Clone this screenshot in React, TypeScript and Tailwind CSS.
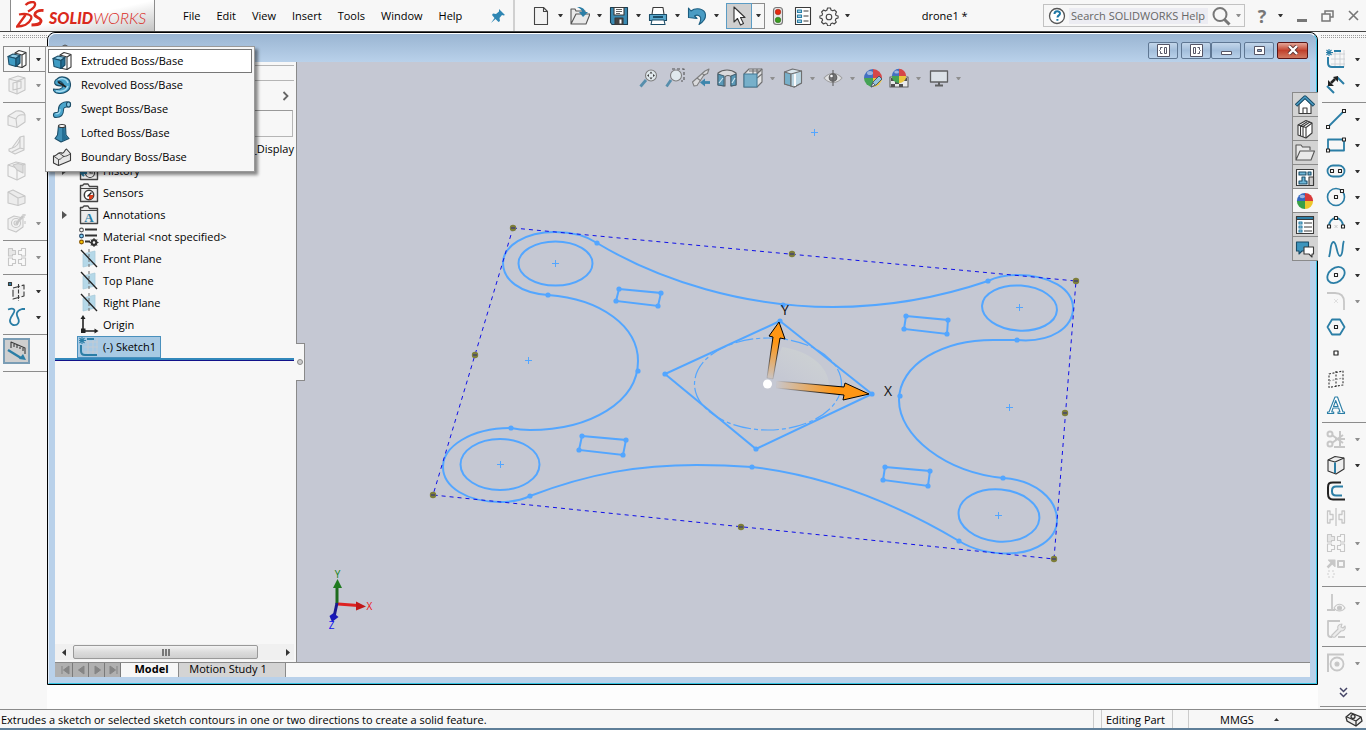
import React from "react";

type Kids = { children?: React.ReactNode };

const G = "#3a3a3a";
const B = "#2b7ea6";
const L = "#9fd0e6";

function Ico({ children, dim = false }: Kids & { dim?: boolean }) {
  return (
    <svg width="20" height="20" viewBox="0 0 20 20" fill="none" stroke={G} strokeWidth="1.100" strokeLinejoin="round" className={dim ? "shrink-0 opacity-25 grayscale" : "shrink-0"} aria-hidden="true">
      {children}
    </svg>
  );
}

function Caret({ dim = false }: { dim?: boolean }) {
  return (
    <svg width="5" height="3" viewBox="0 0 5 3" className="shrink-0" aria-hidden="true">
      <path d="M0 0h5L3 3H2z" fill={dim ? "#8f8f8f" : "#333"} />
    </svg>
  );
}

/* ---------- feature icons ---------- */

const Extrude = () => (
  <>
    <path d="M8 4l4-2.500 7 2V16l-4 2.500L8 17z" fill="#fff" />
    <path d="M8 4l7 2v12.500M15 6l4-2.500" />
    <path d="M1 7.500l5-2.500 7 1.500-4 3z" fill="#8ccbe6" stroke="#1b4d68" />
    <path d="M1 7.500l8 2v8l-7-2z" fill="#3f9cc4" stroke="#1b4d68" />
    <path d="M9 9.500l4-3V14l-4 3.500z" fill="#256f94" stroke="#1b4d68" />
  </>
);
const Revolve = () => (
  <>
    <path d="M5 4c4-4 13-2 13.500 5S12 19 7 18.500c-4-.5-6-2.500-5.500-4.500 5 1 9 0 9.500-3C8 11 5 11 3.500 9.500S2.500 5 5 4z" fill="#4aa5cc" stroke="#1b4d68" />
    <path d="M6 5c4-3 9-1 10 3M4 16c5 1 10 0 12-5" stroke="#a8dbf0" strokeWidth="1.500" />
    <path d="M5.500 6.500c2-1 5 0 7 5" stroke="#1b4d68" />
    <path d="M6 7l8 5" strokeWidth="1.500" stroke="#222" />
  </>
);
const Sweep = () => (
  <>
    <path d="M4 16c4 0 5-2 5-5.500S12 5 16 5.500" stroke="#1b4d68" strokeWidth="6.200" strokeLinecap="round" />
    <path d="M4 16c4 0 5-2 5-5.500S12 5 16 5.500" stroke="#4aa5cc" strokeWidth="4.200" strokeLinecap="round" />
    <ellipse cx="16.500" cy="5.500" rx="2" ry="2.500" fill="#8ccbe6" stroke="#1b4d68" />
    <path d="M3.500 15c4 0 5-2 4.500-5" stroke="#a8dbf0" />
  </>
);
const Loft = () => (
  <>
    <path d="M6.500 3l-1 9L3 15.500l6 3.500 8-3.500-3-3.500-.5-9z" fill="#3f8fb5" stroke="#1b4d68" />
    <path d="M10 4v14l6-2.500-3-3-.5-8z" fill="#256f94" stroke="none" />
    <ellipse cx="10" cy="3" rx="3.500" ry="1.500" fill="#fff" />
  </>
);
const Boundary = () => (
  <>
    <path d="M1.500 9c2.500.5 3.500-2 5.500-3s2.500.5 4 0 1.500-3 3.500-4l4 4.500v7L6.500 18.500l-5-2.500z" fill="#e6e6e6" />
    <path d="M1.500 9l5 3.500c3 0 3-2.500 5.500-3s3.500-.5 6.500-3M6.500 12.500v6M7 6l5 3.500" strokeWidth="0.900" />
  </>
);
const Cut = () => (
  <>
    <path d="M2 4l9-3 7 2v12l-8 4-8-3z" fill="#ddd" />
    <path d="M2 4l8 2v13M10 6l8-3M6 8l8-2v7l-8 2z" />
  </>
);
const FilletBox = () => (
  <>
    <path d="M1 7l8-5c4-.5 8 0 9 4v7l-8 5.500L1 16z" fill="#ddd" />
    <path d="M1 7l8 3c1-3 4-5 9-4M9 10l1 8.500" />
  </>
);
const Rib = () => (
  <>
    <path d="M13 2l4-1v14l-9 4-6-3v-2l3-1z" fill="#ddd" />
    <path d="M13 2v11l-8 4M5 13c4-1 7-4 8-9M13 13l4 1" />
  </>
);
const ShellBox = () => (
  <>
    <path d="M1 4l8-3 9 2v12l-8 4-9-4z" fill="#eee" />
    <path d="M1 4l9 3v12M10 7l8-4" />
    <path d="M6 4l5-1.500 5 1.500v8L10 9z" fill="#999" />
  </>
);
const Draft = () => (
  <>
    <path d="M1 5l5-2 12 6v7l-7 2.500L1 16z" fill="#ccc" />
    <path d="M1 5l10 6v7.500M11 11l7-2" />
  </>
);
const Wizard = () => (
  <>
    <path d="M1 6l6-3 9 2v9l-7 5-8-3z" fill="#ddd" />
    <circle cx="9" cy="10" r="4.500" fill="#eee" />
    <circle cx="9" cy="10" r="2" />
    <path d="M9 11L16 3" strokeWidth="2.500" />
    <path d="M17 1v4M15 2h4M18 8v3" />
  </>
);
const Pattern = () => (
  <>
    <path d="M18.500 1.500h-4v2h-3v4h3v1.500h4zM1.500 11h4v1.500h3v4h-3v2h-4zM18.500 11h-4v1.500h-3v4h3v2h4z" fill="#fff" />
    <path d="M1.500 1.500h4v2h3v4h-3V9h-4z" fill="#bbb" />
  </>
);
const RefGeom = () => (
  <>
    <path d="M6 7l11-3v11L6 18z" fill="#eee" strokeDasharray="7 2" />
    <path d="M11.500 3v17" strokeDasharray="4 1.500" />
    <rect x="1.500" y="1.500" width="3" height="3" fill={B} />
  </>
);
const Curve = () => (
  <path d="M1 2.500c6-2 8 0 5 4.500s-5 8 0 11c5 1 7-3 5-7s-2-7 4-9h3" stroke={B} strokeWidth="1.800" />
);
const Instant = () => (
  <>
    <path d="M4 7V1l14 6v6M7 6V3M10 7V4M13 8V6M16 10V7" />
    <path d="M1 9l13 8" stroke={B} strokeWidth="2.500" />
    <path d="M19 19l-7-1 4-5z" fill={B} stroke="none" />
  </>
);

/* ---------- sketch icons ---------- */

const grid = <path d="M5 5h14M5 10h14M5 15h14M9 1v17M14 1v17M18 1v17" stroke="#c8cbd0" strokeWidth="0.800" />;
const Pt = ({ x, y }: { x: number; y: number }) => <rect x={x - 1.5} y={y - 1.5} width="3" height="3" fill="#fff" stroke="#222" strokeWidth="1.100" />;

const Sketch = () => (
  <>
    {grid}
    <path d="M8 2h7M2 8v6c0 3 1 4 4 4h12" stroke={B} strokeWidth="2" />
    <path d="M3 0v7M0 3.500h7M.5 1l5 5M5.500 1l-5 5" stroke={B} />
  </>
);
const Dim = () => (
  <>
    <path d="M11 2l7 7M1 11l7 7" stroke={B} strokeWidth="2" />
    <path d="M5 8l4-4" strokeWidth="2.500" stroke="#222" />
    <path d="M2 11V5l6 6zM12 1v6L7 2z" fill="#222" stroke="none" />
  </>
);
const LineI = () => (
  <>
    <path d="M2 18L18 2" stroke={B} strokeWidth="1.800" />
    <Pt x={2} y={18} />
    <Pt x={18} y={2} />
  </>
);
const RectI = () => (
  <>
    <path d="M2 4.500h16v11H2z" stroke={B} strokeWidth="1.800" />
    <Pt x={2} y={15.5} />
    <Pt x={18} y={4.5} />
  </>
);
const Slot = () => (
  <>
    <rect x="1.500" y="4.500" width="17" height="11" rx="5.500" stroke={B} strokeWidth="1.800" />
    <Pt x={6} y={10} />
    <Pt x={14} y={10} />
  </>
);
const CircleI = () => (
  <>
    <circle cx="10" cy="10" r="8.500" stroke={B} strokeWidth="1.600" />
    <Pt x={10} y={10} />
    <Pt x={16} y={4} />
  </>
);
const Arc = () => (
  <>
    <path d="M3 13a7 8 0 0 1 14 0" stroke={B} strokeWidth="1.800" />
    <path d="M8.500 12l3 3M11.500 12l-3 3" stroke="#bbb" strokeWidth="0.800" />
    <Pt x={3} y={13.5} />
    <Pt x={17} y={13.5} />
    <Pt x={10} y={5} />
  </>
);
const Spline = () => <path d="M3 18C5 13 4 3 7.500 3s3 14 6.500 14 2-12 4-15" stroke={B} strokeWidth="1.800" />;
const EllipseI = () => (
  <>
    <ellipse cx="10" cy="10" rx="9.500" ry="7" transform="rotate(-38 10 10)" stroke={B} strokeWidth="1.800" />
    <Pt x={10} y={10} />
  </>
);
const SkFillet = () => (
  <>
    <path d="M1 2h8c6 0 9 3 9 9v8" strokeWidth="1.800" />
    <path d="M8 8l4 4M12 8l-4 4" strokeWidth="0.500" />
  </>
);
const Poly = () => (
  <>
    <path d="M6 2.500h8l4.500 7.500-4.500 7.500H6L1.500 10z" stroke={B} strokeWidth="1.800" />
    <Pt x={10} y={10} />
  </>
);
const Point = () => <rect x="8" y="8" width="4" height="4" fill="#fff" stroke="#222" strokeWidth="1.200" />;
const Region = () => (
  <>
    <path d="M3 5l14-3v14L3 18.500zM10 2v16" stroke="#333" strokeDasharray="2 1.500" />
    <path d="M3 12l14-3" stroke="#999" strokeDasharray="2 1.500" />
  </>
);
const LetterA = () => (
  <>
    <path d="M9 2h2.500l5.500 15h1.500v1.500H12V17h2l-1.300-4H7l-1.300 4h2v1.500H1.500V17H3zM9.700 5.500L7.500 11.500h4.600z" stroke={B} strokeWidth="1.100" fill="#fff" />
  </>
);
const Trim = () => (
  <>
    <circle cx="4" cy="5" r="2.500" strokeWidth="2" />
    <circle cx="4" cy="15" r="2.500" strokeWidth="2" />
    <path d="M6 6l11 8M6 14l11-8M14 2v16M9 10h10M8 18h11" strokeWidth="2" />
  </>
);
const Convert = () => (
  <>
    <path d="M2 5l7-3.500L18 3v11l-8 5-8-3z" fill="#eee" stroke="#333" />
    <path d="M9 7l9-4M2 5l7 2" stroke="#333" />
    <path d="M9 7.500v10.500" stroke={B} strokeWidth="2" />
  </>
);
const OffsetI = () => (
  <>
    <path d="M15 1.500H7c-4 0-5 1-5 5v6c0 4 1 6 5 6h12" stroke="#222" strokeWidth="2" />
    <path d="M17 5.500h-7c-3 0-4 1-4 4v1c0 3 1 4 4 4h6" stroke={B} strokeWidth="2" />
  </>
);
const Mirror = () => <path d="M10 1v18M1.500 4H4v3.500h3v5H4V16H1.500zM18.500 4H16v3.500h-3v5h3V16h2.500z" strokeWidth="1.300" />;
const MoveI = () => (
  <>
    <path d="M1.500 8.500l5-5" strokeWidth="2.500" />
    <path d="M2.500 1h6.500v6.500z" fill="#3a3a3a" />
    <rect x="12" y="2" width="6" height="6" strokeWidth="2" />
    <rect x="2" y="12" width="6" height="6" strokeWidth="0.800" strokeDasharray="2 2" />
  </>
);
const Relations = () => (
  <>
    <path d="M6 1v16M1 17h8" strokeWidth="1.800" />
    <path d="M8 15c3-5 8-5 11 0-3 4-8 4-11 0z" />
    <circle cx="13.500" cy="15" r="2" fill="#333" />
  </>
);
const Repair = () => (
  <>
    <path d="M14 2H2v13c0 2 1 3 3 3h1M12 18h7" strokeWidth="1.800" />
    <path d="M6 16l6-6c-1-3 1-5 4-5l-1 3 2 1 2-2c1 3-1 5-4 5l-6 6c-2 1-4-1-3-2z" fill="#ccc" />
  </>
);
const Snaps = () => (
  <>
    <path d="M1 1.500h17M2 1v18" strokeWidth="2" />
    <circle cx="11" cy="11" r="6.500" strokeWidth="1.800" />
    <circle cx="11" cy="11" r="2" fill="#333" />
  </>
);

/* ---------- tree icons ---------- */

const folder = <path d="M1.500 18.500V2.500h2L5 1h4l1.500 2.500h8v15z" fill="#ececec" stroke="#444" strokeWidth="1.400" />;
const folderLine = <path d="M1.500 5.500h17" stroke="#444" />;
const HistoryI = () => (
  <>
    {folder}
    {folderLine}
    <circle cx="11" cy="12" r="4.500" fill="#fff" />
    <path d="M11 9v3h3" />
    <path d="M2 12h6M5 9l-3 3 3 3" stroke={B} strokeWidth="2" />
  </>
);
const Sensors = () => (
  <>
    {folder}
    {folderLine}
    <circle cx="10" cy="12" r="4.700" fill="#fff" strokeWidth="1.500" />
    <path d="M10 12h4.500a4.500 4.500 0 0 1-4.500 4.500z" fill="#e0401c" stroke="none" />
    <path d="M8.500 13.500l4-4" stroke="#222" strokeWidth="1.500" />
  </>
);
const Annotations = () => (
  <>
    {folder}
    {folderLine}
    <text x="10" y="17" textAnchor="middle" fontSize="13" fontWeight="700" fill={B} stroke="none" fontFamily="Liberation Serif, serif">A</text>
  </>
);
const Material = () => (
  <>
    <circle cx="2.500" cy="3" r="1.900" fill="#fff" stroke="#555" />
    <circle cx="2.500" cy="9" r="1.900" fill="#7fd0f2" stroke="#246" />
    <circle cx="2.500" cy="15" r="1.900" fill="#f5c400" stroke="#850" />
    <path d="M6 2.500h12M6 8.500h12M6 14.500h5" stroke="#333" strokeWidth="2.200" />
    <circle cx="15" cy="15.500" r="2.400" stroke="#333" strokeWidth="2.200" />
    <path d="M15 11v9M10.500 15.500h9M12 12.500l6 6M18 12.500l-6 6" stroke="#333" strokeWidth="1" />
    <circle cx="15" cy="15.500" r="1.200" fill="#f7f7f7" stroke="none" />
  </>
);
const Plane = () => (
  <>
    <path d="M4 5l12-3v13L4 18z" fill="#b5d8e8" stroke="#a9cbdb" strokeWidth="0.800" />
    <path d="M10 0v20" stroke="#777" strokeDasharray="3 2" />
    <path d="M2 1l16 17" stroke="#222" strokeWidth="1.300" />
  </>
);
const OriginI = () => (
  <>
    <path d="M4 3v13h13" stroke="#222" strokeWidth="1.600" />
    <path d="M4 0l2.500 4h-5zM19.500 16l-4-2.500v5zM2 13.500h4.500V18H2z" fill="#222" stroke="none" />
  </>
);

/* ---------- application bar icons ---------- */

const NewDoc = () => <path d="M3.500 1.500h9l4 4v13h-13zM12.500 1.500v4h4" fill="#f3f3f3" stroke="#444" />;
const OpenDoc = () => (
  <>
    <path d="M1 18V3h4l1 2h9v3M1 18L6 8h14l-4 10z" fill="#e9e9e9" stroke="#555" />
    <path d="M7 1c5-.5 8 2 8 5h3l-5 5-4-5h3c0-2-2-4-5-5z" fill={B} stroke="none" />
  </>
);
const Save = () => (
  <>
    <path d="M1.500 1.500h17v17H3l-1.500-2z" fill="#3b8bb3" stroke="#1b3d50" />
    <path d="M5 1.500h10v7.500H5z" fill="#fff" />
    <path d="M7 3.500h6M7 5.500h6M7 7.500h4" stroke="#666" />
    <path d="M6 12h8v6.500H6z" fill="#444" />
    <path d="M10.500 13.500h2v4h-2z" fill="#fff" stroke="none" />
  </>
);
const Print = () => (
  <>
    <path d="M5 1.500h10l1 7H4z" fill="#fff" />
    <path d="M1.500 8.500h17v6h-17z" fill="#5aa9cd" stroke="#1b4d68" />
    <path d="M5 11h10" stroke="#1b4d68" strokeWidth="2" />
    <path d="M4 14h12l1 4.500H3z" fill="#fff" stroke="#1b4d68" />
  </>
);
const Undo = () => (
  <path d="M1.500 2l2.500 3C9 1 18 2.500 18.500 9c.3 4-2.500 7-6.500 9.500 2-4 2.500-6 1-8-1.500-1.500-4-1.500-5.500-.5L10 12.500l-8.500-1z" fill="#4a9cc4" stroke="#1b5d80" />
);
const Cursor = () => <path d="M5 1v15l3.500-3.500L11.500 19l3-1.500-3-6h4.500z" fill="#fff" stroke="#333" />;
const Traffic = () => (
  <>
    <rect x="5.500" y="1.500" width="9" height="17" rx="3" fill="#e8e8e8" stroke="#777" />
    <circle cx="10" cy="6" r="2.800" fill="#e62a10" stroke="#8a1a0a" strokeWidth="0.500" />
    <circle cx="10" cy="14" r="2.800" fill="#3b9b20" stroke="#1f5c10" strokeWidth="0.500" />
  </>
);
const ListI = () => (
  <>
    <path d="M2.500 1.500h15v17h-15z" fill="#fff" />
    <path d="M4.500 4h4v2.500h-4zM4.500 9h4v2.500h-4zM4.500 14h4v2.500h-4z" fill={L} stroke={B} />
    <path d="M10.500 5h5M10.500 10h5M10.500 15h5" strokeWidth="1.200" />
  </>
);
const Gear = () => (
  <>
    <path d="M8.500 2h3l.5 2 1.700.8L15.500 4l2 2-1 2 .6 1.500 2 .5v2l-2.100.6-.7 1.600 1 1.800-2 2-1.800-1-1.600.7-.6 2H8.600l-.7-2.100-1.500-.6-1.900 1-2-2 1.100-1.900-.7-1.500-2-.6V10l2-.5.7-1.600-1-1.900 2-2 1.800 1L8 4z" stroke="#444" />
    <circle cx="10" cy="11" r="2.800" stroke="#444" />
  </>
);

/* ---------- view toolbar icons ---------- */

const Glass = ({ children, x = 12 }: Kids & { x?: number }) => (
  <>
    <path d={`M1.500 18.500L${x - 5} 12`} stroke="#4b88a8" strokeWidth="2.800" />
    <circle cx={x} cy="7.500" r="5.500" fill="#e4edf0" stroke="#777" />
    {children}
  </>
);
const ZoomFit = () => <Glass><path d="M12 3.500l1.500 2h-3zM12 11.500l1.500-2h-3zM8 7.500l2-1.500v3zM16 7.500l-2-1.500v3z" fill="#333" stroke="none" /></Glass>;
const ZoomArea = () => (
  <>
    <path d="M7 1h12v12h-3" stroke="#444" strokeDasharray="3 2" />
    <Glass x={11} />
  </>
);
const PrevView = () => (
  <>
    <path d="M1.500 14L14 3l4-2-1.500 4.500L13 7l-7 10.500-3 .5z" fill="#ddd" stroke="#777" />
    <path d="M6 10l4 3M11 5.500l3 2" stroke="#777" />
    <path d="M13 14.500h6" stroke="#2f7fa8" strokeWidth="2.800" />
    <path d="M9 14.500l5-4v8z" fill="#2f7fa8" stroke="none" />
  </>
);
const Section = () => (
  <>
    <path d="M1 5c5-4 13-4 18 0v12l-5 1V9c-1-2-5-2-6 0v9l-7-1z" fill="#ddd" stroke="#555" />
    <path d="M1 6l6 2v10l-6-1zM14 8l5-2v11l-5 1z" fill="#4f95b5" stroke="#35586b" />
    <path d="M2 15l4-5M15 15l3-5" stroke="#d8ecf5" />
  </>
);
const ViewOri = () => (
  <>
    <path d="M1 6l5-5h13v13l-5 5H1z" fill="#e6e6e6" stroke="#666" />
    <path d="M14 6l5-5M10 1v5M14 1v5M14 10l5-4M6 3h12" stroke="#666" />
    <path d="M1 6h13v13H1z" fill="#6faeca" stroke="#35718f" />
  </>
);
const Display = () => (
  <>
    <path d="M1.500 4l8-3 9 2v12l-7 4-10-3z" fill="#ddeaf0" stroke="#666" />
    <path d="M1.500 4L8 6v12l-6.500-2z" fill="#6faeca" stroke="#666" />
    <path d="M8 6l10.500-3v12L11 19l-3-1z" fill="#b9d7e4" stroke="#666" />
    <path d="M12 6v12" stroke="#fff" strokeWidth="2" />
  </>
);
const Eye = () => (
  <>
    <path d="M1 10c5-6 13-6 18 0-5 6-13 6-18 0z" fill="#e6e6e6" stroke="#999" />
    <circle cx="10" cy="9.500" r="3.800" fill="#6b6b6b" stroke="#555" />
    <path d="M10 2v16" stroke="#555" />
    <circle cx="8.500" cy="8" r="1.300" fill="#fff" stroke="none" />
  </>
);
const ball = (
  <>
    <path d="M10 10V1a9 9 0 0 1 9 9z" fill="#d83a3a" stroke="none" />
    <path d="M10 10V1a9 9 0 0 0-9 9z" fill="#3568c0" stroke="none" />
    <path d="M10 10H1a9 9 0 0 0 9 9z" fill="#38a048" stroke="none" />
    <path d="M10 10h9a9 9 0 0 1-9 9z" fill="#edc62c" stroke="none" />
    <ellipse cx="7" cy="5" rx="3" ry="2" fill="#fff" opacity="0.5" stroke="none" />
  </>
);
const Appearance = () => (
  <>
    {ball}
    <path d="M8 19l2-5 6-6 3 3-6 6z" fill="#8fc4de" stroke="#345" strokeWidth="0.900" />
    <path d="M8 19l2-4 2 2z" fill="#fff" stroke="#345" strokeWidth="0.800" />
  </>
);
const Scene = () => (
  <>
    <path d="M1 9h18v10H1z" fill="#eee" stroke="#555" />
    <path d="M2 10h4v3H2zM6 13h4v3H6zM14 10h4v3h-4zM10 16h4v3h-4zM2 16h4v3H2z" fill="#444" stroke="none" />
    <g transform="translate(2 0) scale(.8)">{ball}</g>
  </>
);
const Monitor = () => (
  <>
    <path d="M1.500 3h17v11h-17z" fill="#dfe5ea" stroke="#555" strokeWidth="1.300" />
    <path d="M10 14v3M6 17.500h8" stroke="#555" strokeWidth="2" />
  </>
);

/* ---------- task pane icons ---------- */

const Home = () => (
  <>
    <path d="M4 9v9.500h12V9l-6-6z" fill="#fff" />
    <path d="M8 18.500V13h4v5.500" />
    <path d="M1 10.500L10 2l9 8.500" stroke="#1b4d68" strokeWidth="3.500" />
    <path d="M1.500 10L10 2l8.500 8" stroke="#4a9cc4" strokeWidth="1.500" />
  </>
);
const Books = () => (
  <>
    <path d="M3 6l8-4.500 6 2.500v10l-6 5-8-3z" fill="#fff" />
    <path d="M5.500 7v10M8 8v10M11 8.500V19M3 6l8 2.500L17 4M5.500 7l7-4.500M8 7.500l7-4.500" />
  </>
);
const Folder2 = () => <path d="M1 17V2h5l1.500 2H15v3M1 17L5 8h14.500L16 17z" fill="#e9e9e9" stroke="#555" />;
const Palette = () => (
  <>
    <path d="M1.500 2.500h17v16h-17z" fill="#fff" />
    <path d="M4 5h7v3H4zM13 5h3v3h-3zM7 10h3v4h2v3H4v-3h3z" fill="#6fb7d8" stroke="#1b4d68" />
    <path d="M14 10h4.500v8.500H14z" fill="#ccc" />
  </>
);
const Props = () => (
  <>
    <path d="M1.500 1.500h17v17h-17z" fill="#fff" />
    <path d="M1.500 1.500h17v3h-17z" fill={B} />
    <path d="M4 7h3v2H4zM4 11h3v2H4zM4 15h3v2H4z" fill={L} stroke={B} />
    <path d="M9 8h8M9 12h8M9 16h8" strokeWidth="1.200" />
  </>
);
const Chat = () => (
  <>
    <path d="M1.500 3h12v9H7l-3 3v-3H1.500z" fill="#3d95bd" stroke="#1b4d68" />
    <path d="M9 8h9.500v7H17v3l-3-3H9z" fill="#fff" />
  </>
);

type Tool = { n: string; i: () => React.ReactElement; a?: boolean; d?: boolean; on?: boolean };

const leftGroups: Tool[][] = [
  [{ n: "Extruded Boss/Base", i: Extrude, a: true, on: true }, { n: "Extruded Cut", i: Cut, a: true, d: true }],
  [
    { n: "Fillet", i: FilletBox, a: true, d: true },
    { n: "Rib", i: Rib, d: true },
    { n: "Shell", i: ShellBox, d: true },
    { n: "Draft", i: Draft, d: true },
    { n: "Hole Wizard", i: Wizard, a: true, d: true },
  ],
  [{ n: "Linear Pattern", i: Pattern, a: true, d: true }],
  [{ n: "Reference Geometry", i: RefGeom, a: true }, { n: "Curves", i: Curve, a: true }],
  [{ n: "Instant3D", i: Instant, on: true }],
];

const rightGroups: Tool[][] = [
  [{ n: "Sketch", i: Sketch, a: true }, { n: "Smart Dimension", i: Dim, a: true }],
  [
    { n: "Line", i: LineI, a: true },
    { n: "Rectangle", i: RectI, a: true },
    { n: "Slot", i: Slot, a: true },
    { n: "Circle", i: CircleI, a: true },
    { n: "Arc", i: Arc, a: true },
    { n: "Spline", i: Spline, a: true },
    { n: "Ellipse", i: EllipseI, a: true },
    { n: "Sketch Fillet", i: SkFillet, a: true, d: true },
    { n: "Polygon", i: Poly },
    { n: "Point", i: Point },
    { n: "Plane", i: Region },
    { n: "Text", i: LetterA },
  ],
  [
    { n: "Trim Entities", i: Trim, a: true, d: true },
    { n: "Convert Entities", i: Convert, a: true },
    { n: "Offset Entities", i: OffsetI },
    { n: "Mirror Entities", i: Mirror, d: true },
    { n: "Sketch Pattern", i: Pattern, a: true, d: true },
    { n: "Move Entities", i: MoveI, a: true, d: true },
  ],
  [{ n: "Relations", i: Relations, a: true, d: true }, { n: "Repair Sketch", i: Repair, d: true }],
  [{ n: "Quick Snaps", i: Snaps, a: true, d: true }],
];

const menuItems: Tool[] = [
  { n: "Extruded Boss/Base", i: Extrude, on: true },
  { n: "Revolved Boss/Base", i: Revolve },
  { n: "Swept Boss/Base", i: Sweep },
  { n: "Lofted Boss/Base", i: Loft },
  { n: "Boundary Boss/Base", i: Boundary },
];

const tree: Tool[] = [
  { n: "History", i: HistoryI, a: true },
  { n: "Sensors", i: Sensors },
  { n: "Annotations", i: Annotations, a: true },
  { n: "Material <not specified>", i: Material },
  { n: "Front Plane", i: Plane },
  { n: "Top Plane", i: Plane },
  { n: "Right Plane", i: Plane },
  { n: "Origin", i: OriginI },
  { n: "(-) Sketch1", i: Sketch, on: true },
];

const viewTools: Tool[] = [
  { n: "Zoom to Fit", i: ZoomFit },
  { n: "Zoom to Area", i: ZoomArea },
  { n: "Previous View", i: PrevView },
  { n: "Section View", i: Section },
  { n: "View Orientation", i: ViewOri, a: true },
  { n: "Display Style", i: Display, a: true },
  { n: "Hide/Show Items", i: Eye, a: true },
  { n: "Edit Appearance", i: Appearance },
  { n: "Apply Scene", i: Scene, a: true },
  { n: "View Settings", i: Monitor, a: true },
];

const paneTabs: Tool[] = [
  { n: "Resources", i: Home },
  { n: "Design Library", i: Books },
  { n: "File Explorer", i: Folder2 },
  { n: "View Palette", i: Palette },
  { n: "Appearances", i: () => <g transform="translate(1 1) scale(.9)">{ball}</g>, on: true },
  { n: "Custom Properties", i: Props },
  { n: "Forum", i: Chat },
];

const fileTools: Tool[] = [
  { n: "New", i: NewDoc },
  { n: "Open", i: OpenDoc },
  { n: "Save", i: Save },
  { n: "Print", i: Print },
  { n: "Undo", i: Undo },
];

function Grip() {
  return <div className="ml-[3px] h-[3px] border-y border-dotted border-[#9a9a9a]" />;
}

function FlyoutMenu() {
  return (
    <ul className="absolute left-[42px] top-0 z-20 w-[210px] border border-[#999] bg-[#f7f7f7] p-[2px] shadow-[3px_3px_3px_rgba(0,0,0,0.45)]">
      {menuItems.map(({ n, i: I, on }) => (
        <li key={n}>
          <button className={"flex h-6 w-full items-center gap-[9px] pl-[3px] " + (on ? "border border-[#777] bg-white" : "border border-transparent")}>
            <Ico><I /></Ico>
            <span>{n}</span>
          </button>
        </li>
      ))}
    </ul>
  );
}

function ToolColumn({ groups, left = false }: { groups: Tool[][]; left?: boolean }) {
  return (
    <div className={"flex flex-col pt-2 " + (left ? "pl-[3px]" : "pl-1")}>
      {groups.map((g, k) => (
        <React.Fragment key={k}>
          {k > 0 && <div className="flex h-2 items-center"><div className="h-px w-full bg-[#8c8c8c]" /></div>}
          {g.map(({ n, i: I, a, d, on }) => (
            <div key={n} className="relative flex h-[26px]">
              <button aria-label={n} className={"flex w-[27px] shrink-0 items-center justify-center " + (on ? (a ? "border border-[#8a8a8a] bg-[#f7f7f7]" : "border-2 border-[#7a9db5] bg-[#cfcfcf]") : "")}>
                <Ico dim={d}><I /></Ico>
              </button>
              {a && (
                <button aria-label={n + " options"} className={"flex w-4 items-center justify-center " + (on ? "border-y border-[#8a8a8a]" : "")}>
                  <Caret dim={d} />
                </button>
              )}
              {on && a && <FlyoutMenu />}
            </div>
          ))}
        </React.Fragment>
      ))}
      {left && <div className="mt-[7px] h-px bg-[#8c8c8c]" />}
    </div>
  );
}

function Header() {
  return (
    <header className="flex h-8 shrink-0 items-center border-b border-[#444] bg-[#f7f7f7]">
      <div className="ml-[10px] flex h-full w-[145px] shrink-0 items-center border-x border-[#8c8c8c] bg-linear-to-br from-white from-50% to-[#c4c4c4] pl-[5px]">
        <svg width="28" height="30" viewBox="16 1 28 30" fill="none" stroke="#da291c" strokeWidth="2.300" aria-hidden="true">
          <path d="M25.500 5C29 1.500 36 .5 35 5 34.300 8 31 10 28 11.500" />
          <path d="M19 14.500C26 13 33 14.500 31 19 29 24 23 26.500 17 26.500L25.500 15" />
          <path d="M43.500 10.500C38 10 35 12 34.800 14.500 34.500 17.500 42 17.500 41 21.500 40 25 36 25 31.500 25" strokeWidth="2.800" />
        </svg>
        <span className="ml-[5px] mt-1 whitespace-nowrap font-['Lato'] text-[16px] leading-none text-[#da291c] italic">
          <b className="font-black">SOLID</b>
          <span className="font-light">WORKS</span>
        </span>
      </div>
      <nav className="flex h-full shrink-0 items-center gap-4 border-r-2 border-[#d0d0d0] pl-7 pr-[7px]">
        {["File", "Edit", "View", "Insert", "Tools", "Window", "Help"].map((m) => (
          <button key={m}>{m}</button>
        ))}
        <button aria-label="Pin menu" className="ml-3">
          <svg width="16" height="16" viewBox="0 0 16 16" aria-hidden="true">
            <path d="M9 1l6 6-1.500.5L12 7l-2.500 3 .5 3-1.500 1L5.500 11 1 15l3.500-5L2 7l1-1.500 3 .5L9 3.500z" fill="#2f86b3" />
          </svg>
        </button>
      </nav>
      <div className="flex shrink-0 items-center pl-4">
        {fileTools.map(({ n, i: I }) => (
          <div key={n} className="flex w-[39px] items-center gap-[6px]">
            <button aria-label={n}><Ico><I /></Ico></button>
            <button aria-label={n + " options"} className="flex h-5 w-[7px] items-center justify-center"><Caret /></button>
          </div>
        ))}
        <button aria-label="Select" className="flex h-[26px] w-[26px] items-center justify-center border border-[#5b9cc4] bg-[#cfcfcf]"><Ico><Cursor /></Ico></button>
        <button aria-label="Select options" className="flex h-[26px] w-[13px] items-center justify-center border border-l-0 border-[#8c8c8c]"><Caret /></button>
        <button aria-label="Rebuild" className="flex w-[25px] justify-center"><Ico><Traffic /></Ico></button>
        <button aria-label="File Properties" className="flex w-[26px] justify-center"><Ico><ListI /></Ico></button>
        <button aria-label="Options" className="flex w-[25px] justify-center"><Ico><Gear /></Ico></button>
        <button aria-label="More options" className="ml-1"><Caret /></button>
      </div>
      <h1 className="flex-1 pr-1 text-center">drone1 *</h1>
      <div className="flex h-[23px] w-[202px] shrink-0 items-center border border-[#c2c2c2] bg-[#f7f7f7] pl-1">
        <svg width="18" height="18" viewBox="0 0 18 18" aria-hidden="true">
          <circle cx="9" cy="9" r="7.500" fill="#fff" stroke="#555" strokeWidth="1.300" />
          <path d="M6.500 7c0-3.500 5.500-3.500 5.500-.5 0 2-2.500 1.800-2.500 4M9.400 12v1.800" fill="none" stroke="#1f78a5" strokeWidth="2" />
        </svg>
        <input aria-label="Search SOLIDWORKS Help" placeholder="Search SOLIDWORKS Help" className="ml-[3px] w-[139px] bg-[#ececf2] pl-[2px] outline-none placeholder:text-[#666]" />
        <button aria-label="Search" className="ml-[3px]">
          <svg width="20" height="20" viewBox="0 0 20 20" fill="none" stroke="#777" aria-hidden="true">
            <circle cx="9" cy="8.500" r="6.500" strokeWidth="2" />
            <path d="M13.500 13.500l5 5" strokeWidth="3" />
          </svg>
        </button>
        <button aria-label="Search options" className="ml-[5px]"><Caret dim /></button>
      </div>
      <div className="flex shrink-0 items-center pl-3 pr-[7px]">
        <button aria-label="Help" className="w-[10px] text-[18px] font-bold leading-5 text-[#777]">?</button>
        <button aria-label="Help options" className="ml-[11px]"><Caret /></button>
        <button aria-label="Minimize" className="ml-[14px]">
          <svg width="10" height="16" viewBox="0 0 10 16"><path d="M0 12.500h10" stroke="#777" strokeWidth="3" /></svg>
        </button>
        <button aria-label="Restore" className="ml-[14px]">
          <svg width="13" height="12" viewBox="0 0 13 12" fill="none" stroke="#777" strokeWidth="1.500"><path d="M4 4V1h8v6H9M1 4h8v7H1z" /></svg>
        </button>
        <button aria-label="Close" className="ml-[14px]">
          <svg width="11" height="11" viewBox="0 0 11 11" stroke="#777" strokeWidth="1.600"><path d="M1 1l9 9M10 1l-9 9" /></svg>
        </button>
      </div>
    </header>
  );
}

const frameBtn = "flex h-[17px] w-[30px] items-center justify-center rounded-[2px] border border-[#5f7793] bg-linear-to-b from-[#c3d6ea] via-[#a3bedb] to-[#b9d1ea]";

function TitleBar() {
  return (
    <div className="flex h-7 shrink-0 items-center justify-between bg-linear-to-b from-[#9ab5d2] to-[#b9d1ea] pl-2 pt-1">
      <svg width="16" height="12" viewBox="0 0 16 12" fill="#e5e5e5" stroke="#444" aria-hidden="true"><path d="M4 3l4-2 4 2v4L8 9 4 7z" /></svg>
      <div className="flex gap-[3px] pr-2">
        <button aria-label="Tile left" className={frameBtn}>
          <svg width="13" height="13" viewBox="0 0 13 13" fill="#fff" stroke="#556"><path d="M.5.5h12v12H.5z" /><path d="M5.500 3.500h-2v2l-1 1 1 1v2h2M7.500 3.500h2v6h-2z" fill="none" /></svg>
        </button>
        <div className="flex">
          <button aria-label="Tile right" className={frameBtn}>
            <svg width="13" height="13" viewBox="0 0 13 13" fill="#fff" stroke="#556"><path d="M.5.5h12v12H.5z" /><path d="M7.500 3.500h2v2l1 1-1 1v2h-2M3.500 3.500h2v6h-2z" fill="none" /></svg>
          </button>
          <button aria-label="Minimize document" className={frameBtn}>
            <svg width="11" height="13" viewBox="0 0 11 13" fill="#fff" stroke="#556"><path d="M.5 7.500h10v3H.5z" /></svg>
          </button>
        </div>
        <button aria-label="Restore document" className={frameBtn}>
          <svg width="11" height="9" viewBox="0 0 11 9" fill="#fff" stroke="#556"><path d="M.5.5h10v8H.5z" /><path d="M3.500 3.500h4v2h-4z" fill="#8aa5c2" /></svg>
        </button>
        <button aria-label="Close document" className="flex h-[17px] w-[31px] items-center justify-center rounded-[2px] border border-[#5a1515] bg-linear-to-b from-[#e3a598] via-[#c0402c] to-[#d07860]">
          <svg width="12" height="10" viewBox="0 0 12 10"><path d="M2 1l8 8M10 1L2 9" stroke="#5a3030" strokeWidth="4" /><path d="M2 1l8 8M10 1L2 9" stroke="#fff" strokeWidth="2.400" /></svg>
        </button>
      </div>
    </div>
  );
}

function FeatureTree() {
  return (
    <aside className="relative flex w-[242px] shrink-0 flex-col border-r border-[#8a8a8a] bg-[#f7f7f7] pb-[2px] pt-[3px]">
      <div className="mr-[2px] h-4 border-y border-[#b5b5b5]" />
      <div className="flex h-[29px] items-center justify-end pr-[6px]">
        <button aria-label="More tabs">
          <svg width="8" height="10" viewBox="0 0 8 10" fill="none" stroke="#666" strokeWidth="1.800"><path d="M1.500 1l4 4-4 4" /></svg>
        </button>
      </div>
      <div className="mb-px mr-[3px] h-[27px] border border-[#b5b5b5] border-t-[#999]" />
      <div className="flex h-[22px] items-center justify-end pr-[2px]">_Display</div>
      <ul>
        {tree.map(({ n, i: I, a, on }) => (
          <li key={n} className="flex h-[22px] items-center">
            <span className="flex w-[22px] shrink-0 pl-[7px]">
              {a && <svg width="5" height="8" viewBox="0 0 5 8"><path d="M0 0l5 4-5 4z" fill="#555" /></svg>}
            </span>
            <button className={"flex h-[22px] items-center gap-1 border pl-px pr-1 " + (on ? "border-[#4a90bd] bg-[#a8cae4]" : "border-transparent")}>
              <Ico><I /></Ico>
              <span className="whitespace-nowrap">{n}</span>
            </button>
          </li>
        ))}
      </ul>
      <div className="mr-[2px] h-[3px] shrink-0 border-b border-[#12128a] bg-[#3288bb]" />
      <div className="absolute -right-[9px] top-[281px] z-10 flex h-[38px] w-[9px] items-center justify-center border-y border-r border-[#8a8a8a] bg-[#f7f7f7]">
        <span className="size-[6px] rounded-full border border-[#8a8a8a] bg-[#ccc]" />
      </div>
      <div className="mr-[2px] mt-auto flex h-4 shrink-0 items-center bg-[#f0f0f0]">
        <button aria-label="Scroll left" className="flex w-[18px] justify-center"><svg width="4" height="7" viewBox="0 0 4 7"><path d="M4 0v7L0 3.500z" fill="#333" /></svg></button>
        <div className="flex h-[14px] w-[185px] items-center justify-center gap-px rounded-[2px] border border-[#999] bg-linear-to-b from-[#f3f3f3] via-[#dcdcdc] to-[#cfcfcf]">
          <span className="h-[7px] w-[2px] bg-[#777]" />
          <span className="h-[7px] w-[2px] bg-[#777]" />
          <span className="h-[7px] w-[2px] bg-[#777]" />
        </div>
        <button aria-label="Scroll right" className="ml-auto flex w-3 justify-center"><svg width="4" height="7" viewBox="0 0 4 7"><path d="M0 0v7l4-3.500z" fill="#333" /></svg></button>
      </div>
    </aside>
  );
}

const outline =
  "M597 243C585 235 570 232 555 232 525 232 503 246 503 263 503 280 520 293 548 295 602 299 638 327 638 361 638 402 590 430 530 430Q520 430 511 428C470 428 443 447 443 467 443 487 467 502 500 502 511 502 522 500 530 496 590 473 640 465 697 465Q725 465 752 467C820 475 890 500 959 541 972 549 988 553.500 1007 553.500 1036 553.500 1057 539 1057 520 1057 499 1035 480 1003 478 945 472 899 436 899 400 899 365 942 338 1000 340L1017 340C1052 343 1073 327 1073 308 1073 289 1050 275 1017 275 1005 275 996 277 988 281 935 299 885 307 833 307 745 307 660 281 597 243Z";

const dots = [
  [597, 243], [548, 295], [638, 371], [511, 428], [530, 496], [752, 467], [959, 541], [1003, 478], [900, 396], [1017, 340], [988, 281], [783, 305],
  [780, 321], [872, 394], [756, 449], [665, 374],
  [619, 289], [661, 293], [658, 306], [616, 301],
  [582, 436], [626, 440], [623, 455], [579, 450],
  [906, 316], [948, 320], [947, 334], [904, 329],
  [885, 467], [930, 471], [928, 486], [883, 480],
];
const corners = [[513, 228], [792, 254], [1076, 281], [1065, 413], [1054, 559], [741, 527], [433, 495], [475, 355]];
const crosses = [[555, 263], [528, 360], [500, 464], [1019, 307], [1009, 407], [998, 515], [814, 132]];

function Drawing() {
  return (
    <svg className="absolute inset-0 h-full w-full" viewBox="297 62 1013 600" fill="none" role="img" aria-label="Sketch geometry">
      <defs>
        <linearGradient id="ax" gradientUnits="userSpaceOnUse" x1="774" y1="384" x2="835" y2="390"><stop offset="0" stopColor="#ff9614" stopOpacity="0" /><stop offset="1" stopColor="#ff9614" /></linearGradient>
        <linearGradient id="ay" gradientUnits="userSpaceOnUse" x1="769" y1="382" x2="776" y2="342"><stop offset="0" stopColor="#ff9614" stopOpacity="0" /><stop offset="1" stopColor="#ff9614" /></linearGradient>
        <linearGradient id="ex" gradientUnits="userSpaceOnUse" x1="776" y1="384" x2="835" y2="390"><stop offset="0" stopOpacity="0" /><stop offset="1" /></linearGradient>
        <linearGradient id="ey" gradientUnits="userSpaceOnUse" x1="769" y1="382" x2="776" y2="342"><stop offset="0" stopOpacity="0" /><stop offset="1" /></linearGradient>
        <linearGradient id="fan" x1="0" y1="1" x2="1" y2="0"><stop offset="0.200" stopColor="#d3d6d6" stopOpacity="0" /><stop offset="1" stopColor="#cdd3d0" /></linearGradient>
      </defs>
      <path d="M768 384l14-37c26 4 46 18 47 38z" fill="url(#fan)" />
      <g stroke="#53a6ff" strokeWidth="2">
        <path d={outline} />
        <ellipse cx="555.500" cy="263.500" rx="37" ry="22" />
        <ellipse cx="500" cy="464.500" rx="39.500" ry="25.500" />
        <ellipse cx="1019.500" cy="308" rx="37.500" ry="22.500" transform="rotate(4 1019 308)" />
        <ellipse cx="999" cy="515.500" rx="40.500" ry="26" transform="rotate(5 999 515)" />
        <path d="M780 321l92 73-116 55-91-75zM619 289l42 4-3 13-42-5zM582 436l44 4-3 15-44-5zM906 316l42 4-1 14-43-5zM885 467l45 4-2 15-45-6z" />
        <ellipse cx="768" cy="384" rx="73.500" ry="46" strokeWidth="1.200" strokeDasharray="18 3 4 3" />
      </g>
      <path d="M513 228l563 53-22 278-621-64z" stroke="#1010e8" strokeWidth="1" strokeDasharray="4 4" />
      {corners.map(([x, y]) => (
        <g key={x}>
          <circle cx={x} cy={y} r="3.200" fill="#7d7d38" />
          <path d={`M${x - 2} ${y}h4`} stroke="#1414a0" strokeWidth="0.800" />
        </g>
      ))}
      {dots.map(([x, y]) => <circle key={`${x}-${y}`} cx={x} cy={y} r="2.600" fill="#53a6ff" />)}
      {crosses.map(([x, y]) => <path key={x} d={`M${x - 3} ${y + 0.5}h7M${x + 0.5} ${y - 3}v7`} stroke="#53a6ff" />)}
      <path d="M776 381l68 6 1-4 24 11-26 6 1-5-68-7z" fill="url(#ax)" stroke="url(#ex)" />
      <path d="M767 378l6-41-4-1 10-14 6 17-5-1-7 41z" fill="url(#ay)" stroke="url(#ey)" />
      <circle cx="767.500" cy="384" r="4.500" fill="#fff" />
      <g fontFamily="Open Sans, sans-serif" fontSize="14" fill="#111" textAnchor="middle">
        <text x="785" y="315">Y</text>
        <text x="888" y="396">X</text>
      </g>
      <path d="M337 604v-18" stroke="#1d6b1d" strokeWidth="3" />
      <path d="M337.500 579l4.500 9h-9z" fill="#1f7a1f" />
      <path d="M338 604l20 1.500" stroke="#d22" strokeWidth="3" />
      <path d="M366 606.500l-10 4v-9z" fill="#c11818" />
      <path d="M337 603l-3 14" stroke="#1a1a90" strokeWidth="3" />
      <path d="M332 622l-2.500-6 4-3 5 4z" fill="#1818b8" />
      <g fontFamily="Open Sans, sans-serif" fontSize="10" textAnchor="middle">
        <text x="337.500" y="578" fill="#108010">Y</text>
        <text x="369.500" y="610" fill="#f01010">X</text>
        <text x="331.500" y="629" fill="#1010f0">Z</text>
      </g>
    </svg>
  );
}

function Viewport() {
  return (
    <main className="relative min-w-0 flex-1 bg-[#c5c8d3]">
      <Drawing />
      <div className="relative flex h-8 items-center justify-center pr-[6px]">
        {viewTools.map(({ n, i: I, a }) => (
          <div key={n} className="flex items-center">
            <button aria-label={n} className="flex w-[26px] justify-center opacity-90"><Ico><I /></Ico></button>
            {a && <button aria-label={n + " options"} className="flex w-[14px] justify-center"><Caret dim /></button>}
          </div>
        ))}
      </div>
    </main>
  );
}

function BottomTabs() {
  return (
    <div className="flex h-[15px] shrink-0 border-t border-[#8a8a8a] bg-[#f7f7f7] leading-[11px]">
      <div className="flex bg-[#b0b0b0] pl-[2px]">
        {["M4 2v8M11 2L5.500 6l5.500 4z", "M10 2L4.500 6l5.500 4z", "M5 2l5.500 4L5 10z", "M11 2v8M4 2l5.500 4L4 10z"].map((d, k) => (
          <button key={k} aria-label={["First tab", "Previous tab", "Next tab", "Last tab"][k]} className="flex w-4 items-center justify-center border-r border-[#7a7a7a]">
            <svg width="14" height="12" viewBox="0 0 14 12"><path d={d} fill="#858585" stroke="#858585" /></svg>
          </button>
        ))}
      </div>
      <button className="w-[57px] pb-[3px] pl-1 font-bold">Model</button>
      <button className="w-[108px] border-x border-[#8a8a8a] bg-[#d4d4d4] pb-[3px] pr-2">Motion Study 1</button>
    </div>
  );
}

function TaskPaneTabs() {
  return (
    <div className="absolute right-0 top-[60px] z-10 flex w-[26px] flex-col border-l border-t border-[#8a8a8a]">
      {paneTabs.map(({ n, i: I, on }) => (
        <button key={n} aria-label={n} className={"flex h-6 items-center justify-center border-b border-[#8a8a8a] pr-px " + (on ? "bg-[#f7f7f7]" : "bg-[#d3d3d3]")}>
          <Ico><I /></Ico>
        </button>
      ))}
    </div>
  );
}

export default function App() {
  return (
    <div className="flex h-screen min-h-[730px] flex-col bg-[#f7f7f7] font-['Open_Sans','Noto_Sans',sans-serif] text-[11px] leading-4 text-black">
      <Header />
      <div className="flex min-h-0 flex-1">
        <div className="w-[47px] shrink-0 pt-[3px]">
          <Grip />
          <ToolColumn groups={leftGroups} left />
        </div>
        <div className="relative flex min-w-0 flex-1 flex-col bg-[#fdfdfd] pb-6">
          <section className="flex min-h-0 flex-1 flex-col rounded-t-lg border border-black bg-[#b9d1ea]">
            <div className="flex min-h-0 flex-1 flex-col overflow-hidden rounded-t-lg border border-b-[#35c5e5] border-l-[#e4eefa] border-r-[#35c5e5] border-t-white">
              <TitleBar />
              <div className="flex min-h-0 flex-1 flex-col px-[6px] pb-[6px]">
                <div className="flex min-h-0 flex-1">
                  <FeatureTree />
                  <Viewport />
                </div>
                <BottomTabs />
              </div>
            </div>
          </section>
          <TaskPaneTabs />
        </div>
        <div className="flex w-12 shrink-0 flex-col pt-[3px]">
          <Grip />
          <ToolColumn groups={rightGroups} />
          <button aria-label="More tools" className="mt-[11px] flex justify-center pl-[3px]">
            <svg width="9" height="12" viewBox="0 0 9 12" fill="none" stroke="#446" strokeWidth="1.500"><path d="M1 1l3.500 3.500L8 1M1 6l3.500 3.500L8 6" /></svg>
          </button>
          <div className="mb-[2px] ml-[2px] mt-auto h-px bg-[#8c8c8c]" />
        </div>
      </div>
      <footer className="flex h-[21px] shrink-0 items-stretch border-b-2 border-t border-b-[#5f7f99] border-t-[#8a8a8a] bg-[#f7f7f7]">
        <p className="flex flex-1 items-center pl-px pt-px">Extrudes a sketch or selected sketch contours in one or two directions to create a solid feature.</p>
        <div className="flex w-[9px] border-x border-[#ccc]" />
        <div className="flex w-[71px] items-center border-r border-[#ccc] pl-1 pt-px">Editing Part</div>
        <div className="w-4 border-r border-[#ccc]" />
        <div className="flex w-[177px] items-center pl-[31px] pt-px">
          <button className="flex items-center gap-5">
            MMGS
            <svg width="5" height="3" viewBox="0 0 5 3"><path d="M0 3h5L2.500 0z" fill="#333" /></svg>
          </button>
          <svg className="ml-auto mr-[3px]" width="18" height="15" viewBox="0 0 18 15" fill="#eee" stroke="#333" strokeWidth="1.300" aria-hidden="true">
            <path d="M1 5l5-4 10 4 1 4-6 5L2 9z" />
            <path d="M11 9l5-4M11 9v5M2 5l9 4" />
            <circle cx="8" cy="4.500" r="2" />
          </svg>
        </div>
      </footer>
    </div>
  );
}
